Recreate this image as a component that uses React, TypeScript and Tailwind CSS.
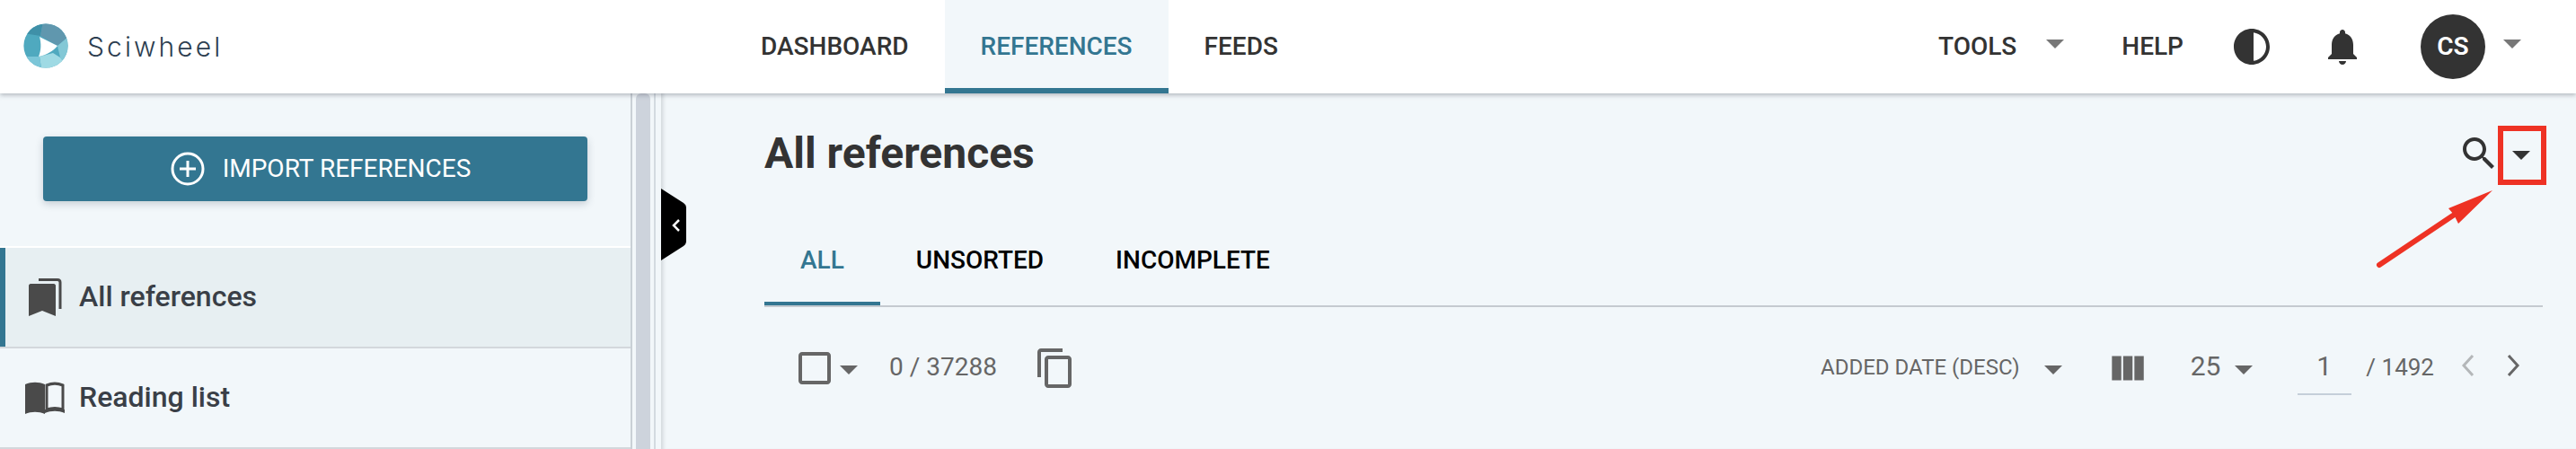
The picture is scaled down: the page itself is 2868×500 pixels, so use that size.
import React from "react";

function Caret({ className = "" }: { className?: string }) {
  return (
    <svg width="20" height="10" viewBox="0 0 20 10" className={className}>
      <polygon points="0,0 20,0 10,10" fill="currentColor" />
    </svg>
  );
}

function Mi({ d, size = 48, className = "" }: { d: string; size?: number; className?: string }) {
  return (
    <svg width={size} height={size} viewBox="0 0 24 24" className={className}>
      <path d={d} fill="currentColor" />
    </svg>
  );
}

function Logo() {
  return (
    <svg width="50" height="50" viewBox="0 0 50 50" className="shrink-0">
      <defs>
        <clipPath id="logo-disc">
          <circle cx="25" cy="25" r="24.6" />
        </clipPath>
      </defs>
      <g clipPath="url(#logo-disc)">
        <rect width="50" height="50" fill="#4fa9bf" />
        <polygon points="0,-2 22,-2 19,14 0,11" fill="#3f90a8" />
        <polygon points="22,-2 50,-2 50,15 38,25 19,14" fill="#6097ae" />
        <polygon points="38,25 50,15 50,50 41,38" fill="#83c8d6" />
        <polygon points="18,37 33,33 41,38 50,50 20,50" fill="#9fdae4" />
        <polygon points="0,37 18,37 20,50 0,50" fill="#7cc6d8" />
        <path d="M18 15 L38 25 C33 31 26 35 17 37 C20 30 20 22 18 15 Z" fill="#ffffff" />
      </g>
    </svg>
  );
}

export default function App() {
  return (
    <div className="relative h-[500px] w-[2868px] overflow-hidden bg-[#f2f7fa] font-['Roboto',sans-serif]">
      <header className="relative z-10 flex h-[104px] items-stretch bg-white shadow-[0_2px_5px_rgba(60,70,80,0.35)]">
        <div className="flex w-[807px] items-center pb-[2px] pl-[26px]">
          <Logo />
          <span className="ml-[21px] pt-[3px] font-['Inter',sans-serif] text-[30px] font-light tracking-[3.1px] text-[#2d3e50]">Sciwheel</span>
        </div>
        <nav className="flex text-[28px] font-medium text-[#333]">
          <a className="flex items-center px-10 pb-[1px]">DASHBOARD</a>
          <a className="flex items-center border-b-[6px] border-[#337691] bg-[#f2f7fa] px-10 pt-[5px] text-[#337691]">REFERENCES</a>
          <a className="flex items-center px-10 pb-[1px]">FEEDS</a>
        </nav>
        <div className="ml-auto flex items-center pr-[61px] text-[28px] font-medium text-[#333]">
          <span className="pb-[1px]">TOOLS</span>
          <Caret className="mb-[6px] ml-[33px] text-[#777]" />
          <span className="ml-[64px] pb-[1px]">HELP</span>
          <Mi className="ml-[52px] text-[#333]" d="M12 22c5.52 0 10-4.48 10-10S17.52 2 12 2 2 6.48 2 12s4.48 10 10 10zm1-17.93c3.94.49 7 3.86 7 7.93s-3.06 7.44-7 7.93V4.07z" />
          <Mi className="ml-[53px] text-[#333]" d="M12 22c1.1 0 2-.9 2-2h-4c0 1.1.9 2 2 2zm6-6v-5c0-3.07-1.63-5.64-4.5-6.32V4c0-.83-.67-1.5-1.5-1.5s-1.5.67-1.5 1.5v.68C7.64 5.36 6 7.92 6 11v5l-2 2v1h16v-1l-2-2z" />
          <div className="ml-[63px] flex h-[72px] w-[72px] items-center justify-center rounded-full bg-[#333] text-[28px] font-semibold text-white">CS</div>
          <Caret className="mb-[6px] ml-[20px] text-[#777]" />
        </div>
      </header>

      <div className="flex h-[396px]">
        <aside className="flex w-[736px] shrink-0">
          <div className="w-[704px] border-r-2 border-[#c9d0d6]">
            <div className="px-12 pb-[50px] pt-12">
              <button className="flex h-[72px] w-[606px] items-center justify-center rounded-[4px] bg-[#337691] pl-[12px] text-[28px] text-white shadow-[0_3px_8px_rgba(40,60,80,0.22)]">
                <svg width="38" height="38" viewBox="0 0 38 38" className="mr-[20px]">
                  <circle cx="19" cy="19" r="17" fill="none" stroke="#fff" strokeWidth="3" />
                  <path d="M19 10v18M10 19h18" stroke="#fff" strokeWidth="3" />
                </svg>
                IMPORT REFERENCES
              </button>
            </div>
            <div className="flex h-[114px] items-center border-b-2 border-t-2 border-b-[#d3d8dc] border-t-white bg-[#e7eff2] text-[32px] font-medium text-[#3a3f47] shadow-[inset_6px_0_0_#337691]">
              <svg width="40" height="46" viewBox="0 0 40 46" className="ml-[30px] shrink-0">
                <path d="M4 8h26c1 0 2 1 2 2v34l-15-6-15 6V10c0-1 1-2 2-2z" fill="#4a4a4a" />
                <path d="M13 3.5h21c2 0 3 1 3 3V36" fill="none" stroke="#4a4a4a" strokeWidth="3" />
              </svg>
              <span className="ml-[18px] pb-[2px]">All references</span>
            </div>
            <div className="flex h-[112px] items-center border-b-2 border-[#d3d8dc] text-[32px] font-medium text-[#3a3f47]">
              <svg width="44" height="36" viewBox="0 0 44 36" className="ml-[28px] shrink-0">
                <path d="M0 3c7-3 15-3 22 0v33c-7-3-15-3-22 0z" fill="#4a4a4a" />
                <path d="M24 4c6-2.500 12-2.500 18 0v27c-6-2-12-2-18 0z" fill="none" stroke="#4a4a4a" strokeWidth="3" />
                <path d="M22 35c7-3 15-3 22 0v-4H22z" fill="#4a4a4a" />
              </svg>
              <span className="ml-[16px] pb-[2px]">Reading list</span>
            </div>
          </div>
          <div className="ml-[4px] h-full w-[16px] rounded-t-[6px] bg-[#cdd3dc]" />
          <div className="ml-[4px] h-full w-[2px] bg-[#d3dae0]" />
        </aside>

        <main className="relative min-w-0 flex-1 pl-[115px] pr-[37px] shadow-[inset_5px_0_4px_-3px_rgba(80,90,100,0.22)]">
          <div className="flex h-[132px] items-start">
            <h1 className="mt-[41px] text-[48px] font-bold leading-[52px] text-[#333]">All references</h1>
            <div className="ml-auto mt-[43px] flex items-start text-[#333]">
              <Mi className="-mr-[1px]" d="M15.5 14h-.79l-.28-.27C15.41 12.59 16 11.11 16 9.5 16 5.91 13.09 3 9.5 3S3 5.91 3 9.500 5.91 16 9.5 16c1.61 0 3.09-.59 4.23-1.57l.27.28v.79l5 4.99L20.49 19l-4.99-5zm-6 0C7.01 14 5 11.99 5 9.500S7.01 5 9.500 5 14 7.01 14 9.500 11.99 14 9.500 14z" />
              <Caret className="ml-[14px] mr-[14px] mt-[21px]" />
            </div>
          </div>
          <div className="flex h-[106px] border-b-2 border-[#c5cad0] text-[28px] font-medium text-black">
            <span className="flex h-[104px] items-center border-b-4 border-[#337691] px-10 pt-[7px] text-[#337691]">ALL</span>
            <span className="flex h-[104px] items-center px-10 pt-[3px]">UNSORTED</span>
            <span className="flex h-[104px] items-center px-10 pt-[3px]">INCOMPLETE</span>
          </div>
          <div className="flex h-[96px] items-start pt-[44px] text-[#666]">
            <Mi className="ml-[32px]" d="M19 5v14H5V5h14m0-2H5c-1.100 0-2 .9-2 2v14c0 1.100.9 2 2 2h14c1.100 0 2-.9 2-2V5c0-1.100-.9-2-2-2z" />
            <Caret className="ml-[4px] mt-[21px]" />
            <span className="ml-[35px] mt-[7px] text-[28px] leading-[32px]">0 / 37288</span>
            <Mi className="ml-[41px]" d="M16 1H4c-1.100 0-2 .9-2 2v14h2V3h12V1zm3 4H8c-1.100 0-2 .9-2 2v14c0 1.100.9 2 2 2h11c1.100 0 2-.9 2-2V7c0-1.100-.9-2-2-2zm0 16H8V7h11v14z" />
            <span className="ml-auto mt-[7px] text-[24px] leading-[32px]">ADDED DATE (DESC)</span>
            <Caret className="ml-[27px] mt-[21px]" />
            <Mi size={50} className="ml-[47px]" d="M10 18h5V5h-5v13zm-6 0h5V5H4v13zM16 5v13h5V5h-5z" />
            <span className="ml-[46px] mt-[6px] text-[30px] leading-[32px]">25</span>
            <Caret className="ml-[16px] mt-[21px]" />
            <span className="ml-[50px] mt-[6px] h-[48px] w-[60px] border-b-2 border-[#c5cfd9] pl-[21px] text-[30px] leading-[32px]">1</span>
            <span className="ml-[16px] mt-[7px] text-[26px] leading-[32px]">/ 1492</span>
            <svg width="16" height="26" viewBox="0 0 16 26" className="ml-[30px] mt-[8px]">
              <path d="M13 2 3 13l10 11" fill="none" stroke="#b4b7b9" strokeWidth="3" />
            </svg>
            <svg width="16" height="26" viewBox="0 0 16 26" className="ml-[34px] mt-[8px]">
              <path d="M3 2l10 11L3 24" fill="none" stroke="#666" strokeWidth="3" />
            </svg>
            <div className="w-[25px]" />
          </div>

          <svg width="28" height="80" viewBox="0 0 28 80" className="absolute left-0 top-[106px]">
            <path d="M0 0 L25 16 Q28 18 28 21 V59 Q28 62 25 64 L0 80 Z" fill="#000" />
            <path d="M20 35 14 41l6 6" fill="none" stroke="#fff" strokeWidth="2.500" />
          </svg>
          <div className="absolute left-[2045px] top-[36px] h-[66px] w-[54px] border-[6px] border-[#ee3224]" />
          <svg width="140" height="95" viewBox="0 0 140 95" className="absolute left-[1908px] top-[106px]">
            <path d="M5 85 L90 28" stroke="#ee3224" strokeWidth="6" strokeLinecap="round" />
            <polygon points="131,2 82,22 88,29 93,39" fill="#ee3224" />
          </svg>
        </main>
      </div>
    </div>
  );
}
